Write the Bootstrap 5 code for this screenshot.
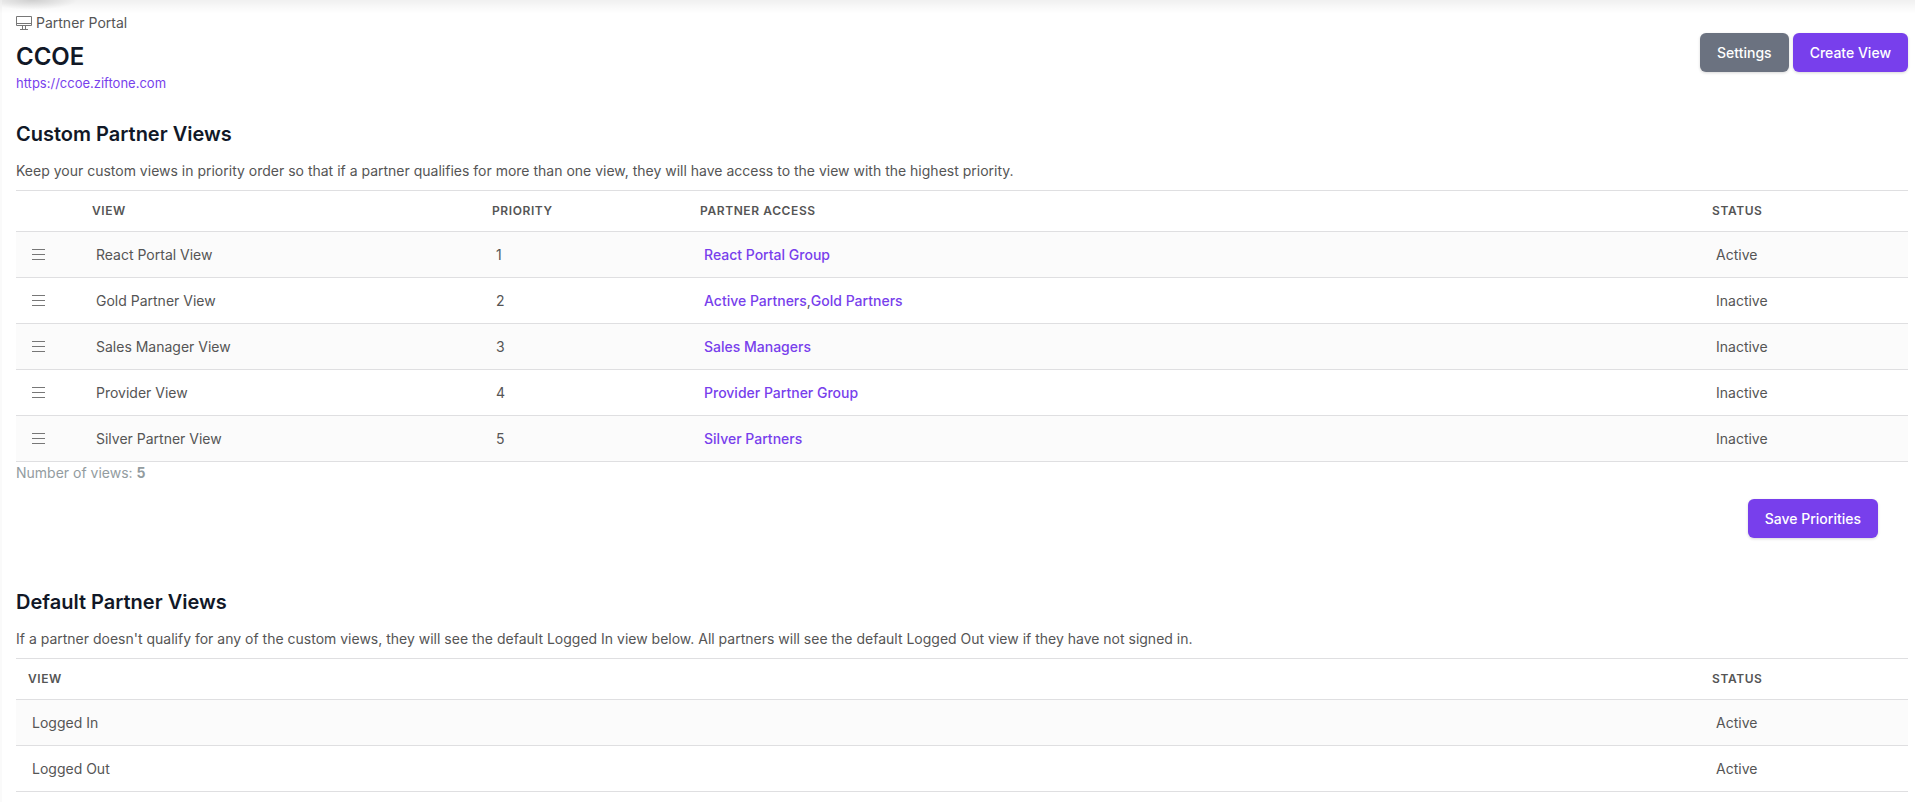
<!DOCTYPE html>
<html lang="en">
<head>
<meta charset="utf-8">
<meta name="viewport" content="width=device-width, initial-scale=1">
<title>Partner Portal</title>
<link href="https://cdn.jsdelivr.net/npm/bootstrap@5.3.0/dist/css/bootstrap.min.css" rel="stylesheet">
<style>
  :root { --violet: #783fec; --ink: #111827; --line: #dfdfe1; }
  body { font-family: Inter, "Liberation Sans", sans-serif; font-size: 14px; line-height: 20px; color: #555; }
  a { color: var(--violet); text-decoration: none; }
  a:hover { color: #5b21b6; }

  /* shadow cast by the application bar above the page */
  .bar-shadow { height: 14px; background: linear-gradient(rgba(0,0,0,.06), rgba(0,0,0,.02) 60%, transparent); pointer-events: none; }
  .bar-shadow::before { content: ""; position: absolute; top: 0; left: 2px; width: 76px; height: 10px; background: radial-gradient(ellipse at 40% 0, rgba(0,0,0,.14), transparent 70%); }

  .page-body { border-left: 2px solid #fafafa; padding: 13px 7px 0 14px; min-height: 100vh; }
  .portal-title { font-size: 24px; line-height: 32px; font-weight: 600; color: var(--ink); }
  .portal-link { font-size: 13px; }
  .section-title { font-size: 20px; line-height: 28px; font-weight: 600; color: var(--ink); margin: 0 0 13px; }
  .section-note { margin: 0 0 9px; }
  .custom-views { padding-top: 27px; }
  .default-views { padding-top: 50px; }

  .btn-app { --bs-btn-padding-x: 17px; --bs-btn-padding-y: 9px; --bs-btn-font-size: 14px; --bs-btn-font-weight: 500; --bs-btn-border-radius: 6px; --bs-btn-border-width: 0;
    --bs-btn-line-height: 21px; --bs-btn-color: #fff; --bs-btn-hover-color: #fff; --bs-btn-bg: var(--violet); --bs-btn-hover-bg: #6428d9; box-shadow: 0 1px 3px rgba(0,0,0,.16); }
  .btn-gray { --bs-btn-bg: #6b7280; --bs-btn-hover-bg: #4b5563; }
  .save-row { margin: 16px 30px 0 0; }

  .view-table { table-layout: fixed; border-top: 1px solid var(--line); --bs-table-color: #555; --bs-table-striped-color: #555; --bs-table-striped-bg: #fbfbfb; --bs-table-bg: transparent; color: #555; border-color: var(--line); }
  .view-table th { font-size: 12px; line-height: 16px; font-weight: 600; letter-spacing: .05em; text-transform: uppercase; padding: 12px; }
  .view-table td { padding: 13px 16px 12px; }
  .view-table td a { font-weight: 500; }
  .grip { vertical-align: -1px; }
  .col-grip { width: 64px; }
  .col-view { width: 400px; }
  .col-narrow { width: 208px; }
  .view-count { color: #939c9f; padding-top: 1px; }
</style>
</head>
<body>
<div class="bar-shadow position-absolute top-0 start-0 w-100"></div>
<main class="page-body">
  <header class="d-flex justify-content-between align-items-start">
    <div>
      <div class="d-flex align-items-center gap-1">
        <svg width="16" height="16" viewBox="0 0 16 16" fill="none" stroke="#777" aria-hidden="true"><path d="M.5 1.500h15v9.000H.5zM.5 8.500h15M6.500 11v3M9.500 11v3M4 14.500h8"/></svg>
        <span>Partner Portal</span>
      </div>
      <h1 class="portal-title mb-0 mt-2">CCOE</h1>
      <a class="portal-link d-block" href="#portal">https://ccoe.ziftone.com</a>
    </div>
    <div class="d-flex gap-1 mt-3 pt-1">
      <button type="button" class="btn btn-app btn-gray">Settings</button>
      <button type="button" class="btn btn-app">Create View</button>
    </div>
  </header>

  <section class="custom-views">
    <h2 class="section-title">Custom Partner Views</h2>
    <p class="section-note">Keep your custom views in priority order so that if a partner qualifies for more than one view, they will have access to the view with the highest priority.</p>
    <table class="table table-striped view-table mb-0">
      <colgroup><col class="col-grip"><col class="col-view"><col class="col-narrow"><col><col class="col-narrow"></colgroup>
      <thead>
        <tr><th></th><th scope="col">View</th><th scope="col">Priority</th><th scope="col">Partner Access</th><th scope="col">Status</th></tr>
      </thead>
      <tbody>
        <tr><td><svg class="grip" width="13" height="12" aria-hidden="true"><use href="#bars"/></svg></td><td>React Portal View</td><td>1</td><td><a href="#g1">React Portal Group</a></td><td>Active</td></tr>
        <tr><td><svg class="grip" width="13" height="12" aria-hidden="true"><use href="#bars"/></svg></td><td>Gold Partner View</td><td>2</td><td><a href="#g2">Active Partners</a>,<a href="#g3">Gold Partners</a></td><td>Inactive</td></tr>
        <tr><td><svg class="grip" width="13" height="12" aria-hidden="true"><use href="#bars"/></svg></td><td>Sales Manager View</td><td>3</td><td><a href="#g4">Sales Managers</a></td><td>Inactive</td></tr>
        <tr><td><svg class="grip" width="13" height="12" aria-hidden="true"><use href="#bars"/></svg></td><td>Provider View</td><td>4</td><td><a href="#g5">Provider Partner Group</a></td><td>Inactive</td></tr>
        <tr><td><svg class="grip" width="13" height="12" aria-hidden="true"><use href="#bars"/></svg></td><td>Silver Partner View</td><td>5</td><td><a href="#g6">Silver Partners</a></td><td>Inactive</td></tr>
      </tbody>
    </table>
    <div class="view-count">Number of views: <strong>5</strong></div>
    <div class="save-row d-flex justify-content-end">
      <button type="button" class="btn btn-app">Save Priorities</button>
    </div>
  </section>

  <section class="default-views">
    <h2 class="section-title">Default Partner Views</h2>
    <p class="section-note">If a partner doesn't qualify for any of the custom views, they will see the default Logged In view below. All partners will see the default Logged Out view if they have not signed in.</p>
    <table class="table table-striped view-table mb-0">
      <colgroup><col><col class="col-narrow"></colgroup>
      <thead>
        <tr><th scope="col">View</th><th scope="col">Status</th></tr>
      </thead>
      <tbody>
        <tr><td>Logged In</td><td>Active</td></tr>
        <tr><td>Logged Out</td><td>Active</td></tr>
      </tbody>
    </table>
  </section>
</main>
<svg class="position-absolute" width="0" height="0" aria-hidden="true"><symbol id="bars" viewBox="0 0 13 12"><path d="M0 .5h13M0 5.500h13M0 10.500h13" stroke="#777" fill="none"/></symbol></svg>
<script src="https://cdn.jsdelivr.net/npm/bootstrap@5.3.0/dist/js/bootstrap.bundle.min.js"></script>
</body>
</html>
